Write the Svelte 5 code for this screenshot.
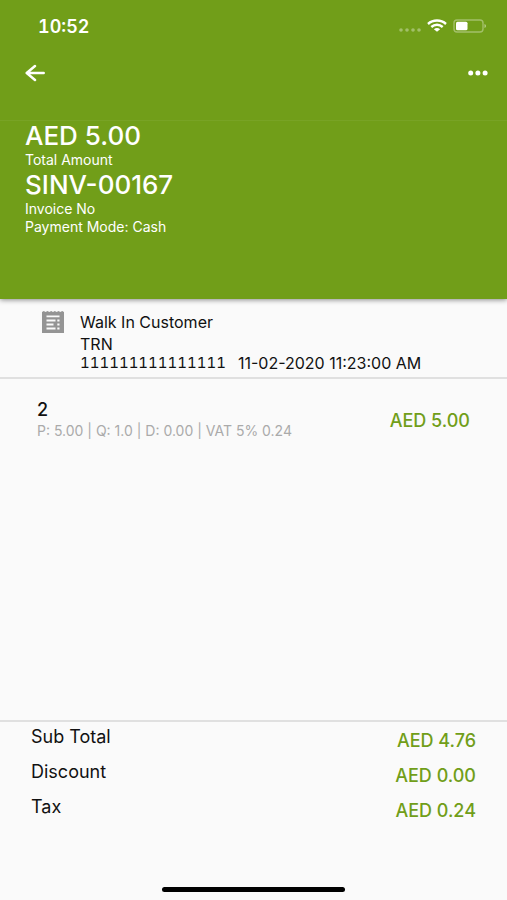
<script lang="ts">
  type Item = {
    name: string;
    details: string;
    amount: string;
  };

  const items: Item[] = [
    {
      name: "2",
      details: "P: 5.00 | Q: 1.0 | D: 0.00 | VAT 5% 0.24",
      amount: "AED 5.00",
    },
  ];

  const totals = [
    { label: "Sub Total", amount: "AED 4.76" },
    { label: "Discount", amount: "AED 0.00" },
    { label: "Tax", amount: "AED 0.24" },
  ];
</script>

<div class="screen">
  <header class="header">
    <div class="status-bar">
      <span class="clock">10:52</span>
      <div class="status-icons">
        <svg class="signal" width="24" height="4" viewBox="0 0 24 4" fill="#fff" opacity="0.35" aria-hidden="true">
          <circle cx="3" cy="2" r="1.8" />
          <circle cx="9" cy="2" r="1.8" />
          <circle cx="15" cy="2" r="1.8" />
          <circle cx="21" cy="2" r="1.8" />
        </svg>
        <svg class="wifi" width="20" height="14" viewBox="0 0 20 14" fill="none" stroke="#fff" stroke-width="2.4" aria-hidden="true">
          <path d="M1 5C6 .4 14 .4 19 5" />
          <path d="M4.3 8C7.6 5 12.4 5 15.7 8" />
          <path d="M10 12.8 6.9 10.2C8.6 8.6 11.4 8.6 13.1 10.2Z" fill="#fff" stroke="none" />
        </svg>
        <svg width="34" height="14" viewBox="0 0 34 14" aria-hidden="true">
          <rect x="1" y="1" width="29" height="12" rx="3" fill="none" stroke="#fff" stroke-opacity="0.35" stroke-width="1.4" />
          <rect x="3" y="2.7" width="11.5" height="8.6" rx="1.5" fill="#fff" />
          <path d="M31.5 5C33.5 5.7 33.5 8.3 31.5 9Z" fill="#fff" fill-opacity="0.5" />
        </svg>
      </div>
    </div>

    <nav class="toolbar">
      <button class="icon-btn" aria-label="Back">
        <svg width="20" height="18" viewBox="0 0 20 18" fill="none" stroke="#fff" stroke-width="2.5" stroke-linecap="round" stroke-linejoin="round">
          <path d="M18.7 9H2M10 2 1.7 9 10 16" />
        </svg>
      </button>
      <button class="icon-btn" aria-label="More options">
        <svg width="21" height="6" viewBox="0 0 21 6" fill="#fff">
          <circle cx="2.7" cy="3" r="2.5" />
          <circle cx="9.9" cy="3" r="2.5" />
          <circle cx="17.1" cy="3" r="2.5" />
        </svg>
      </button>
    </nav>

    <div class="summary">
      <h1>AED 5.00</h1>
      <p>Total Amount</p>
      <h1>SINV-00167</h1>
      <p>Invoice No</p>
      <p>Payment Mode: Cash</p>
    </div>
  </header>

  <section class="customer">
    <svg width="22" height="22" viewBox="0 0 22 22" aria-hidden="true">
      <path d="M0 1 1.8 0 3.6 1 5.5 0 7.3 1 9.2 0 11 1 12.8 0 14.7 1 16.5 0 18.3 1 20.2 0 22 1V22H0Z" fill="#949494" />
      <path d="M4.5 5.3H17.5M4.5 9.5H13.5M4.5 13.5H11.5M4.5 17.5H13.5M15.3 9.5H17.5M15.3 13.5H17.5M15.3 17.5H17.5" stroke="#fafafa" stroke-width="1.8" />
    </svg>
    <div class="customer-info">
      <p>Walk In Customer</p>
      <p>TRN</p>
      <p class="trn">
        <span class="trn-number">111111111111111</span>
        <span>11-02-2020 11:23:00 AM</span>
      </p>
    </div>
  </section>

  <main class="items">
    {#each items as item}
      <div class="item">
        <div>
          <p class="item-name">{item.name}</p>
          <p class="item-details">{item.details}</p>
        </div>
        <span class="amount">{item.amount}</span>
      </div>
    {/each}
  </main>

  <footer class="footer">
    <dl class="totals">
      {#each totals as total}
        <div class="total">
          <dt>{total.label}</dt>
          <dd class="amount">{total.amount}</dd>
        </div>
      {/each}
    </dl>
    <div class="home-indicator"></div>
  </footer>
</div>

<style>
  :global(body) {
    margin: 0;
    background: #fafafa;
  }

  .screen {
    display: flex;
    flex-direction: column;
    min-height: 100vh;
    font-family: Inter, "Liberation Sans", sans-serif;
    color: #111;
  }

  h1,
  p,
  dl,
  dd {
    margin: 0;
  }

  /* --- Header --- */
  .header {
    background: #719e19;
    color: #fff;
    box-shadow: 0 1px 5px rgba(0, 0, 0, 0.45);
  }

  .status-bar {
    display: flex;
    align-items: center;
    justify-content: space-between;
    height: 52px;
    padding: 0 20px 0 38px;
  }

  .clock {
    font-size: 18px;
    font-weight: 600;
    font-variant-numeric: tabular-nums;
  }

  .status-icons {
    display: flex;
    align-items: center;
  }

  .signal {
    margin-top: 8px;
  }

  .wifi {
    margin: 0 6px 0 5px;
  }

  .toolbar {
    display: flex;
    align-items: center;
    justify-content: space-between;
    height: 42px;
    padding: 0 18px 26px 25px;
    border-bottom: 1px solid #78a325;
  }

  .icon-btn {
    display: flex;
    padding: 0;
    border: none;
    background: none;
    cursor: pointer;
  }

  .summary {
    padding: 0 25px 64px;
  }

  .summary h1 {
    font-size: 26px;
    font-weight: 500;
    line-height: 29px;
  }

  .summary p {
    font-size: 14px;
    line-height: 16px;
  }

  .summary h1 + p {
    line-height: 20px;
  }

  /* --- Customer --- */
  .customer {
    display: flex;
    gap: 16px;
    padding: 12px 24px 6px 42px;
    border-bottom: 2px solid #e0e0e0;
  }

  .customer svg {
    flex-shrink: 0;
  }

  .customer-info {
    font-size: 16px;
    line-height: 22px;
  }

  .trn {
    display: flex;
    gap: 12px;
    line-height: 16px;
  }

  .trn-number {
    font-size: 15px;
    font-variant-numeric: tabular-nums;
  }

  /* --- Items --- */
  .items {
    flex: 1;
    padding: 20px 37px;
  }

  .item {
    display: flex;
    align-items: center;
    justify-content: space-between;
  }

  .item-name {
    font-size: 18px;
    font-weight: 500;
    line-height: 22px;
  }

  .item-details {
    font-size: 14px;
    line-height: 20px;
    color: #aaa;
  }

  .amount {
    font-size: 18px;
    font-weight: 500;
    color: #719e19;
  }

  /* --- Totals --- */
  .footer {
    border-top: 2px solid #e0e0e0;
    padding-bottom: 8px;
  }

  .totals {
    padding: 0 31px 60px;
  }

  .total {
    display: flex;
    justify-content: space-between;
    height: 35px;
    font-size: 18px;
    line-height: 30px;
  }

  .total .amount {
    padding-top: 4px;
  }

  .home-indicator {
    width: 36%;
    height: 5px;
    margin: 0 auto;
    border-radius: 3px;
    background: #000;
  }
</style>
